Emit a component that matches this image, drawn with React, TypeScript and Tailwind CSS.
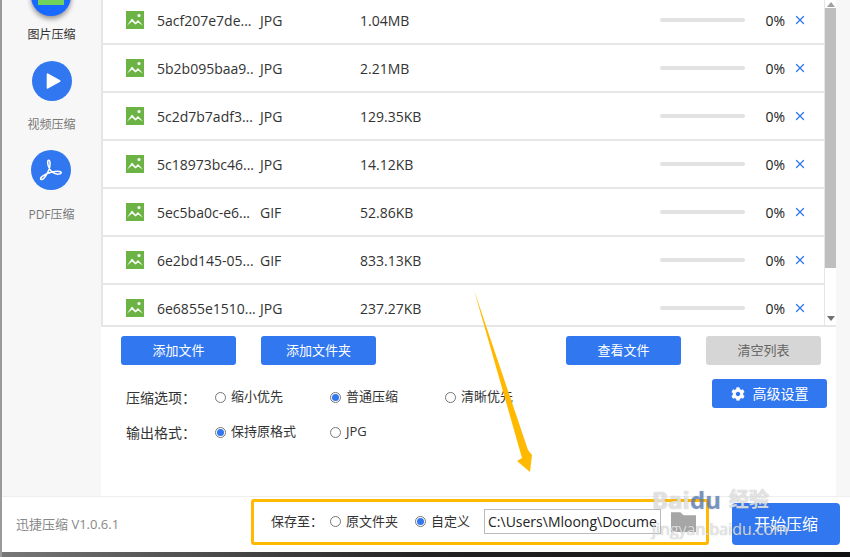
import { FaCog } from "react-icons/fa"
import { X } from "lucide-react"

const font = { fontFamily: '"Open Sans", "Noto Sans CJK SC", sans-serif' }

const files = [
  ["5acf207e7de...", "JPG", "1.04MB"],
  ["5b2b095baa9..", "JPG", "2.21MB"],
  ["5c2d7b7adf3...", "JPG", "129.35KB"],
  ["5c18973bc46...", "JPG", "14.12KB"],
  ["5ec5ba0c-e6...", "GIF", "52.86KB"],
  ["6e2bd145-05...", "GIF", "833.13KB"],
  ["6e6855e1510...", "JPG", "237.27KB"],
]

function ImageIcon() {
  return (
    <svg viewBox="0 0 18 18" className="w-[18px] h-[18px] shrink-0">
      <rect width="18" height="18" fill="#6ab344" />
      <circle cx="13" cy="4.5" r="1.6" fill="#fff" />
      <path d="M1 14.5 6 7.5l3.5 4 2.5-2.5 5 5.5-5-3-2.5 2L6 10.5z" fill="#fff" />
    </svg>
  )
}

function Radio({ on, label, className }: { on?: boolean; label: string; className: string }) {
  return (
    <label className={`flex items-center gap-[5px] ${className}`}>
      <span className="w-[11px] h-[11px] rounded-full border border-[#767676] bg-white flex items-center justify-center shrink-0">
        {on && <span className="w-[7px] h-[7px] rounded-full bg-[#3177f0]" />}
      </span>
      <span>{label}</span>
    </label>
  )
}

function Btn({ label, gray }: { label: string; gray?: boolean }) {
  return (
    <button className={`w-[115px] h-[29px] rounded-[3px] text-[13px] flex items-center justify-center ${gray ? "bg-[#d6d6d6] text-[#666]" : "bg-[#3177f0] text-white"}`}>
      {label}
    </button>
  )
}

function Row({ name, type, size }: { name: string; type: string; size: string }) {
  return (
    <div className="h-[48px] shrink-0 border-b-2 border-[#e6e6e6] flex items-center pl-[23px] text-[14px] text-[#333]">
      <ImageIcon />
      <span className="w-[116px] pl-[13px] whitespace-nowrap shrink-0 text-[14px]">{name}</span>
      <span className="w-[100px] shrink-0">{type}</span>
      <span className="w-[300px] shrink-0">{size}</span>
      <span className="w-[85px] h-[4px] rounded-full bg-[#e2e2e2] shrink-0" />
      <span className="w-[40px] text-right shrink-0 text-[#222]">0%</span>
      <X className="w-[14px] h-[14px] ml-[8px] text-[#3177f0]" strokeWidth={2.2} />
    </div>
  )
}

export default function App() {
  return (
    <div className="relative w-[850px] h-[557px] overflow-hidden bg-white border-l-2 border-[#9a9a9a] flex flex-col" style={font}>
      <div className="h-[496px] flex shrink-0">
        {/* sidebar */}
        <div className="w-[99px] shrink-0 bg-[#f7f7f7] flex flex-col items-center">
          <div className="w-[40px] h-[40px] -mt-[24px] rounded-full bg-[#1769ff] shadow-[0_3px_5px_rgba(0,0,0,0.4)] flex items-end justify-center pb-[11px] -ml-[2px]">
            <div className="w-[26px] h-[10px] bg-[#6fd35c]" />
          </div>
          <span className="mt-[10px] text-[12px] leading-[18px] text-[#333]">图片压缩</span>
          <div className="mt-[17px] w-[40px] h-[40px] rounded-full bg-[#3177f0] flex items-center justify-center">
            <svg viewBox="0 0 20 20" className="w-[18px] h-[18px] ml-[3px]">
              <path d="M3 2.5v15a1 1 0 0 0 1.5.8L18 10.8a1 1 0 0 0 0-1.6L4.500 1.700A1 1 0 0 0 3 2.500z" fill="#fff" />
            </svg>
          </div>
          <span className="mt-[15px] text-[12px] leading-[18px] text-[#777]">视频压缩</span>
          <div className="mt-[16px] w-[40px] h-[40px] rounded-full bg-[#3177f0] flex items-center justify-center -ml-[2px]">
            <svg viewBox="0 0 24 24" className="w-[26px] h-[26px]" fill="none" stroke="#fff" strokeWidth="1.4">
              <path d="M2.500 20.500c1.500 1.500 5-2.500 7.500-8.500 1.300-3.200 1.700-8.500 0-9-1.500-.4-1.300 3.500 0 6.500 2.200 5 5.500 6.500 9 6.300 2.500-.2 3-1.600 1.700-2.200-2-.9-7.500-.2-11.500 1.400-3.500 1.500-7.500 3.800-6.700 5.500z" />
            </svg>
          </div>
          <span className="mt-[16px] text-[12px] leading-[18px] text-[#777]">PDF压缩</span>
        </div>

        {/* main */}
        <div className="flex-1 flex flex-col min-w-0">
          <div className="h-[327px] shrink-0 flex overflow-hidden border-l-2 border-b-2 border-[#e6e6e6]">
            <div className="flex-1 flex flex-col -mt-[3px] min-w-0">
              {files.map((f) => (
                <Row key={f[0]} name={f[0]} type={f[1]} size={f[2]} />
              ))}
            </div>
            <div className="w-[12px] shrink-0 bg-white border-l border-[#e6e6e6] flex flex-col items-center">
              <div className="h-[8px] shrink-0 flex items-center justify-center">
                <span className="border-x-[4px] border-x-transparent border-b-[5px] border-b-[#a0a0a0]" />
              </div>
              <div className="w-full h-[260px] bg-[#bebebe]" />
              <div className="mt-auto h-[14px] flex items-center justify-center">
                <span className="border-x-[4px] border-x-transparent border-t-[5px] border-t-[#707070]" />
              </div>
            </div>
          </div>

          <div className="flex-1 relative pt-[9px] pl-[20px] text-[13px] text-[#333]">
            <div className="flex">
              <Btn label="添加文件" />
              <div className="ml-[25px]"><Btn label="添加文件夹" /></div>
              <div className="ml-[190px]"><Btn label="查看文件" /></div>
              <div className="ml-[25px]"><Btn label="清空列表" gray /></div>
            </div>
            <div className="flex items-start mt-[14px]">
              <div className="flex flex-col pl-[5px] pt-[9px] gap-[17px]">
                <div className="flex items-center h-[18px]">
                  <span className="w-[89px] text-[14px]">压缩选项：</span>
                  <Radio label="缩小优先" className="w-[115px]" />
                  <Radio on label="普通压缩" className="w-[115px]" />
                  <Radio label="清晰优先" className="w-[115px]" />
                </div>
                <div className="flex items-center h-[18px]">
                  <span className="w-[89px] text-[14px]">输出格式：</span>
                  <Radio on label="保持原格式" className="w-[115px]" />
                  <Radio label="JPG" className="w-[115px]" />
                </div>
              </div>
              <button className="ml-[-6px] w-[115px] h-[29px] ml-auto mr-[9px] rounded-[3px] bg-[#3177f0] text-white text-[14px] flex items-center justify-center gap-[8px]">
                <FaCog className="w-[14px] h-[14px]" />
                高级设置
              </button>
            </div>
          </div>
        </div>
        <div className="w-[14px] shrink-0 bg-[#f7f7f7]" />
      </div>

      {/* footer */}
      <div className="h-[56px] shrink-0 border-t border-[#eee] flex items-center text-[13px] text-[#333]">
        <span className="ml-[14px] w-[235px] text-[#888]">迅捷压缩 V1.0.6.1</span>
        <div className="w-[458px] h-[46px] -mt-[6px] border-[3px] border-[#ffb900] rounded-[3px] flex items-center pl-[17px]">
          <span className="w-[59px] text-[13px]">保存至：</span>
          <Radio label="原文件夹" className="w-[85px]" />
          <Radio on label="自定义" className="w-[69px]" />
          <input
            readOnly
            value="C:\Users\Mloong\Documents"
            className="w-[177px] h-[25px] border border-[#bbb] px-[3px] text-[14px] text-[#222] outline-none"
          />
          <svg viewBox="0 0 24 20" className="ml-[10px] w-[25px] h-[21px]">
            <path d="M0 1h9l3 3h12v16H0z" fill="#a6a6a6" />
          </svg>
        </div>
        <button className="ml-[23px] -mt-[2px] w-[108px] h-[42px] rounded-[4px] bg-[#3177f0] text-white text-[16px]">开始压缩</button>
      </div>
      <div className="flex-1 bg-gradient-to-r from-[#777] via-[#222] to-[#111]" />

      {/* annotation arrow */}
      <svg className="absolute left-[-2px] top-0 w-[850px] h-[557px] pointer-events-none" viewBox="0 0 850 557">
        <path d="M474 290 528 450 532 455 530 472 517 461 522 458z" fill="#ffb900" />
      </svg>

      {/* watermark */}
      <div className="absolute left-[650px] top-[486px] w-[160px] h-[58px] pointer-events-none text-white/70 [text-shadow:0_0_1px_rgba(120,120,120,0.7)]">
        <div className="flex items-center h-[28px] leading-none">
          <span className="text-[24px] font-bold">Bai</span>
          <span className="text-[24px] font-bold text-[#3177f0]/40">du</span>
          <span className="ml-[8px] text-[20px] font-bold">经验</span>
        </div>
        <div className="mt-[5px] text-[16px] leading-[20px] whitespace-nowrap">jingyan.baidu.com</div>
      </div>
    </div>
  )
}
